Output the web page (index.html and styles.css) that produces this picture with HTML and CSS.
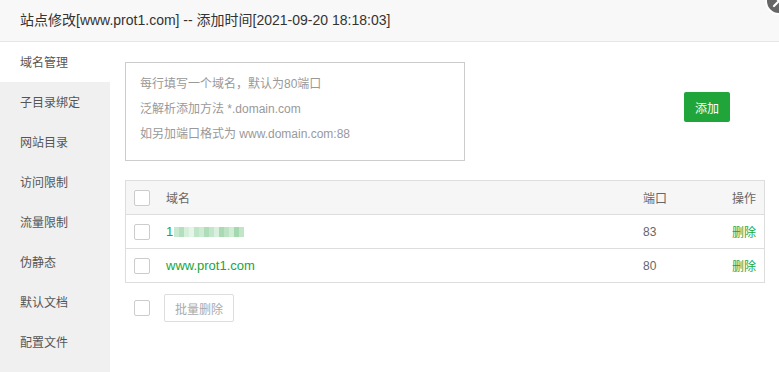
FILE: index.html
```html
<!DOCTYPE html>
<html lang="zh-CN">
<head>
  <meta charset="utf-8">
  <title>站点修改</title>
  <link rel="stylesheet" href="styles.css">
</head>
<body>
  <div class="layer">
    <div class="layer-title">站点修改[www.prot1.com] -- 添加时间[2021-09-20 18:18:03]</div>
    <a class="layer-close" href="#">
      <svg width="30" height="30" viewBox="0 0 30 30">
        <circle cx="15" cy="15" r="13" fill="#666" stroke="#fff" stroke-width="2"/>
        <path d="M10 10 L20 20 M20 10 L10 20" stroke="#fff" stroke-width="2.2" stroke-linecap="round"/>
      </svg>
    </a>

    <div class="layer-body">
      <ul class="side-menu">
        <li class="active">域名管理</li>
        <li>子目录绑定</li>
        <li>网站目录</li>
        <li>访问限制</li>
        <li>流量限制</li>
        <li>伪静态</li>
        <li>默认文档</li>
        <li>配置文件</li>
      </ul>

      <div class="content">
        <div class="add-row">
          <div class="domain-input">
            <p>每行填写一个域名，默认为80端口</p>
            <p>泛解析添加方法 *.domain.com</p>
            <p>如另加端口格式为 www.domain.com:88</p>
          </div>
          <button class="btn-green">添加</button>
        </div>

        <div class="table">
          <div class="tr th">
            <div class="td"><span class="checkbox"></span></div>
            <div class="td">域名</div>
            <div class="td">端口</div>
            <div class="td op">操作</div>
          </div>
          <div class="tr">
            <div class="td"><span class="checkbox"></span></div>
            <div class="td link">1<span class="blur">
              <i style="background:#c8e8cf"></i><i style="background:#b3dfbd"></i><i style="background:#d6efdb"></i><i style="background:#e6f5e9"></i><i style="background:#bfe4c6"></i><i style="background:#cdebd3"></i><i style="background:#b0ddb9"></i><i style="background:#c3e6ca"></i><i style="background:#d9f0de"></i><i style="background:#a9dab3"></i><i style="background:#bde3c5"></i><i style="background:#cfecd5"></i><i style="background:#a5d8af"></i><i style="background:#c0e5c7"></i>
            </span></div>
            <div class="td">83</div>
            <div class="td op"><a href="#">删除</a></div>
          </div>
          <div class="tr">
            <div class="td"><span class="checkbox"></span></div>
            <div class="td link">www.prot1.com</div>
            <div class="td">80</div>
            <div class="td op"><a href="#">删除</a></div>
          </div>
        </div>

        <div class="batch-row">
          <span class="checkbox"></span>
          <button class="btn-default">批量删除</button>
        </div>
      </div>
    </div>
  </div>
</body>
</html>
```

FILE: styles.css
```css
* {
  box-sizing: border-box;
}

body {
  margin: 0;
  font-family: "Liberation Sans", "Noto Sans CJK SC", sans-serif;
  font-size: 12px;
  color: #555;
  background: #fff;
}

.layer {
  position: relative;
  width: 779px;
  height: 372px;
  overflow: hidden;
}

.layer-title {
  height: 42px;
  line-height: 41px;
  padding-left: 20px;
  font-size: 14px;
  color: #333;
  background: #f8f8f8;
  border-bottom: 1px solid #e6e6e6;
}

.layer-close {
  position: absolute;
  right: -15px;
  top: -14px;
}

.layer-body {
  display: flex;
  height: 330px;
}

.side-menu {
  width: 110px;
  margin: 0;
  padding: 0;
  list-style: none;
  background: #f0f0f0;
}

.side-menu li {
  height: 40px;
  line-height: 38px;
  padding: 2px 0 0 20px;
  color: #555;
}

.side-menu li.active {
  background: #fff;
}

.content {
  flex: 1;
  padding: 20px 14px 0 15px;
}

.add-row {
  display: flex;
  align-items: flex-start;
  justify-content: space-between;
}

.domain-input {
  width: 340px;
  height: 99px;
  border: 1px solid #ccc;
  padding: 9px 14px;
  color: #999;
}

.domain-input p {
  margin: 0;
  line-height: 25px;
}

.btn-green {
  margin: 30px 35px 0 0;
  width: 46px;
  height: 30px;
  border: 0;
  border-radius: 2px;
  background: #20a53a;
  color: #fff;
  font-family: inherit;
  font-size: 12px;
}

.table {
  margin-top: 19px;
  border: 1px solid #ddd;
}

.tr {
  display: grid;
  grid-template-columns: 40px 477px 61px 60px;
  height: 34px;
  align-items: center;
  border-top: 1px solid #ddd;
}

.tr.th {
  border-top: 0;
  height: 33px;
  background: #f6f6f6;
  color: #666;
}

.td {
  color: #666;
}

.td:first-child {
  padding-left: 8px;
  display: flex;
}

.td.op {
  text-align: right;
  padding-right: 8px;
}

.td.link {
  color: #20a53a;
  font-size: 13px;
  display: flex;
  align-items: center;
}

.td.op a {
  color: #20a53a;
  text-decoration: none;
}

.blur {
  display: flex;
  margin-left: 1px;
}

.blur i {
  display: block;
  width: 5px;
  height: 10px;
}

.checkbox {
  display: inline-block;
  width: 16px;
  height: 16px;
  border: 1px solid #ccc;
  border-radius: 2px;
  background: #fff;
}

.batch-row {
  display: flex;
  align-items: center;
  margin-top: 11px;
  padding-left: 9px;
}

.btn-default {
  margin-left: 14px;
  height: 28px;
  padding: 0 10px;
  border: 1px solid #ddd;
  border-radius: 2px;
  background: #fff;
  color: #aaa;
  font-family: inherit;
  font-size: 12px;
}
```
